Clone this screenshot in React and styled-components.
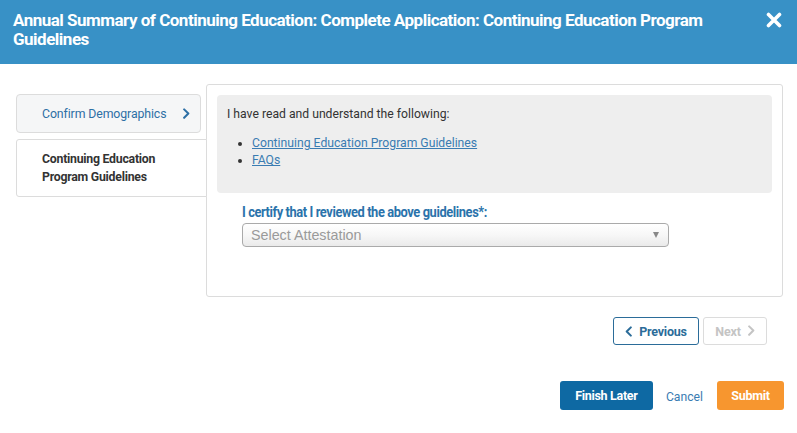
import React from "react";
import styled, { createGlobalStyle } from "styled-components";

const Global = createGlobalStyle`
  html, body { margin: 0; padding: 0; background: #fff; }
  body { font-family: Roboto, "Liberation Sans", Arial, sans-serif; color: #333; }
  * { box-sizing: border-box; }
`;

const Page = styled.div`
  width: 797px;
  height: 433px;
  background: #fff;
`;

const Header = styled.header`
  background: #3891c6;
  height: 64px;
  display: flex;
  align-items: flex-start;
  justify-content: space-between;
  padding: 11px 13px 0 13px;
`;

const Title = styled.h1`
  margin: 0;
  color: #fff;
  font-size: 17px;
  line-height: 19px;
  font-weight: 700;
  letter-spacing: -0.5px;
  max-width: 720px;
`;

const Close = styled.button`
  border: 0;
  background: none;
  padding: 0;
  margin-top: 1px;
  width: 18px;
  height: 18px;
  cursor: pointer;
  display: flex;
`;

const Body = styled.div`
  display: flex;
  padding: 20px 14px 0 16px;
`;

const Nav = styled.nav`
  width: 190px;
  padding-top: 10px;
  display: flex;
  flex-direction: column;
  gap: 6px;
`;

const Tab = styled.div`
  border: 1px solid #dcdcdc;
  border-radius: ${(p) => (p.$active ? "3px 0 0 3px" : "4px")};
  background: ${(p) => (p.$active ? "#fff" : "#f5f6f7")};
  width: ${(p) => (p.$active ? "191px" : "185px")};
  margin-right: ${(p) => (p.$active ? "-1px" : "0")};
  min-height: ${(p) => (p.$active ? "58px" : "39px")};
  display: flex;
  align-items: center;
  justify-content: space-between;
  padding: ${(p) => (p.$active ? "8px 20px 9px 25px" : "0 10px 0 25px")};
  font-size: 12.3px;
  line-height: 18px;
  font-weight: ${(p) => (p.$active ? 700 : 400)};
  color: ${(p) => (p.$active ? "#333" : "#2d6fa5")};
  letter-spacing: ${(p) => (p.$active ? "-0.25px" : "-0.1px")};
  position: relative;
  z-index: 1;
`;

const Panel = styled.section`
  flex: 1;
  height: 213px;
  border: 1px solid #dcdcdc;
  border-radius: 3px;
  padding: 10px;
`;

const InfoBox = styled.div`
  background: #eeeeee;
  border-radius: 4px;
  height: 98px;
  padding: 11px 10px 0 10px;
  font-size: 12.2px;
  line-height: 17px;
`;

const Intro = styled.p`
  margin: 0 0 12px 0;
  color: #333;
`;

const List = styled.ul`
  margin: 0;
  padding-left: 25px;
  line-height: 17px;
`;

const Link = styled.a`
  color: #3a7cb2;
  text-decoration: underline;
`;

const Field = styled.div`
  padding: 11px 0 0 25px;
  display: flex;
  flex-direction: column;
  gap: 2px;
`;

const Label = styled.label`
  font-size: 14px;
  line-height: 17px;
  font-weight: 700;
  color: #2b73ab;
  letter-spacing: -0.45px;
  transform: scaleX(0.92);
  transform-origin: left center;
  white-space: nowrap;
`;

const Select = styled.div`
  width: 427px;
  height: 24px;
  border: 1px solid #aaa;
  border-radius: 4px;
  background: linear-gradient(#ffffff 0%, #f7f7f7 50%, #eaeaea 100%);
  display: flex;
  align-items: center;
  justify-content: space-between;
  padding: 0 9px 0 8px;
  font-family: "Liberation Sans", Arial, sans-serif;
  font-size: 14.3px;
  color: #9a9a9a;
`;

const Caret = styled.span`
  width: 0;
  height: 0;
  border-left: 3.5px solid transparent;
  border-right: 3.5px solid transparent;
  border-top: 6px solid #888;
`;

const StepRow = styled.div`
  display: flex;
  justify-content: flex-end;
  gap: 4px;
  padding: 20px 30px 0 0;
`;

const StepButton = styled.button`
  height: 28px;
  width: ${(p) => p.$w}px;
  border-radius: 3px;
  background: #fff;
  border: 1px solid ${(p) => (p.$disabled ? "#dcdcdc" : "#2b6c99")};
  color: ${(p) => (p.$disabled ? "#c4c4c4" : "#2b6c99")};
  font-family: Roboto, sans-serif;
  font-size: 12.5px;
  font-weight: 700;
  display: flex;
  align-items: center;
  justify-content: center;
  gap: 6px;
  padding: 0;
  letter-spacing: -0.2px;
`;

const Footer = styled.div`
  display: flex;
  justify-content: flex-end;
  align-items: center;
  padding: 36px 13px 0 0;
`;

const ActionButton = styled.button`
  height: 29px;
  width: ${(p) => p.$w}px;
  border: 0;
  border-radius: 3px;
  background: ${(p) => p.$bg};
  color: #fff;
  font-family: Roboto, sans-serif;
  font-size: 12.5px;
  font-weight: 700;
  letter-spacing: -0.3px;
  padding: 0;
`;

const CancelLink = styled.a`
  color: #3a7cb2;
  font-size: 12.2px;
  text-decoration: none;
  margin: 2px 14px 0 13px;
`;

const Chevron = ({ color, size = 8 }) => (
  <svg width={size} height={size * 1.4} viewBox="0 0 8 12">
    <path d="M2 1.5 L6.5 6 L2 10.5" fill="none" stroke={color} strokeWidth="2.2" strokeLinecap="round" strokeLinejoin="round" />
  </svg>
);

const ChevronLeft = ({ color }) => (
  <svg width="8" height="11" viewBox="0 0 8 12">
    <path d="M6 1.5 L1.5 6 L6 10.5" fill="none" stroke={color} strokeWidth="2.2" strokeLinecap="round" strokeLinejoin="round" />
  </svg>
);

export default function App() {
  return (
    <Page>
      <Global />
      <Header>
        <Title>Annual Summary of Continuing Education: Complete Application: Continuing Education Program Guidelines</Title>
        <Close aria-label="Close">
          <svg width="16" height="16" viewBox="0 0 16 16">
            <path d="M2.5 2.5 L13.5 13.5 M13.5 2.5 L2.5 13.5" stroke="#fff" strokeWidth="3.6" strokeLinecap="round" />
          </svg>
        </Close>
      </Header>
      <Body>
        <Nav>
          <Tab>
            <span>Confirm Demographics</span>
            <Chevron color="#2d6fa5" />
          </Tab>
          <Tab $active>
            Continuing Education Program Guidelines
          </Tab>
        </Nav>
        <Panel>
          <InfoBox>
            <Intro>I have read and understand the following:</Intro>
            <List>
              <li><Link href="#">Continuing Education Program Guidelines</Link></li>
              <li><Link href="#">FAQs</Link></li>
            </List>
          </InfoBox>
          <Field>
            <Label>I certify that I reviewed the above guidelines*:</Label>
            <Select>
              <span>Select Attestation</span>
              <Caret />
            </Select>
          </Field>
        </Panel>
      </Body>
      <StepRow>
        <StepButton $w={86}>
          <ChevronLeft color="#2b6c99" />
          Previous
        </StepButton>
        <StepButton $w={64} $disabled>
          Next
          <Chevron color="#c4c4c4" />
        </StepButton>
      </StepRow>
      <Footer>
        <ActionButton $w={93} $bg="#0e69a3">Finish Later</ActionButton>
        <CancelLink href="#">Cancel</CancelLink>
        <ActionButton $w={67} $bg="#f7962f">Submit</ActionButton>
      </Footer>
    </Page>
  );
}
